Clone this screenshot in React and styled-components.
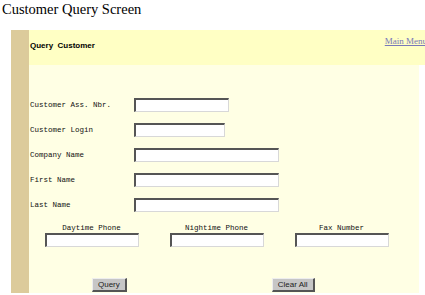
import React from 'react';
import styled, { createGlobalStyle } from 'styled-components';

const GlobalStyle = createGlobalStyle`
  html, body {
    margin: 0;
    padding: 0;
    background: #ffffff;
    overflow: hidden;
  }
`;

const fields = [
  { label: 'Customer Ass. Nbr.', width: 95 },
  { label: 'Customer Login', width: 91 },
  { label: 'Company Name', width: 145 },
  { label: 'First Name', width: 145 },
  { label: 'Last Name', width: 145 },
];

const phones = ['Daytime Phone', 'Nightime Phone', 'Fax Number'];

const App = () => {
  return (
    <Page>
      <GlobalStyle />
      <Title>Customer Query Screen</Title>
      <Panel>
        <Sidebar />
        <Main>
          <Header>
            <HeaderTitle>Query&nbsp;&nbsp;Customer</HeaderTitle>
            <MenuLink href="#">Main Menu</MenuLink>
          </Header>
          <Body>
            <Fields>
              {fields.map((f) => (
                <React.Fragment key={f.label}>
                  <Label>{f.label}</Label>
                  <Field>
                    <TextInput width={f.width} />
                  </Field>
                </React.Fragment>
              ))}
            </Fields>
            <Phones>
              {phones.map((p) => (
                <PhoneCell key={p}>
                  <PhoneLabel>{p}</PhoneLabel>
                  <TextInput width={94} />
                </PhoneCell>
              ))}
            </Phones>
            <Buttons>
              <Button type="button" offset={62}>Query</Button>
              <Button type="button" offset={145}>Clear All</Button>
            </Buttons>
          </Body>
        </Main>
      </Panel>
    </Page>
  );
};

export default App;

const Page = styled.div`
  width: 425px;
  height: 295px;
`;

const Title = styled.h1`
  margin: 0 0 0 2px;
  font-family: 'Liberation Serif', 'Times New Roman', serif;
  font-weight: normal;
  font-size: 14.5px;
  line-height: 19px;
  color: #000;
`;

const Panel = styled.div`
  margin: 11px 0 0 11px;
  width: 408px;
  display: flex;
  align-items: stretch;
`;

const Sidebar = styled.div`
  width: 18px;
  flex: none;
  background: #dccb9b;
`;

const Main = styled.div`
  flex: 1;
  display: flex;
  flex-direction: column;
  background: #ffffe4;
  min-width: 0;
`;

const Header = styled.div`
  height: 35px;
  margin-right: -6px;
  background: #ffffc4;
  display: flex;
  justify-content: space-between;
  align-items: flex-start;
  padding-left: 1px;
  overflow: hidden;
`;

const HeaderTitle = styled.div`
  margin-top: 11px;
  font-family: 'Liberation Sans', Arial, sans-serif;
  font-weight: bold;
  font-size: 8px;
  line-height: 10px;
  color: #000;
`;

const MenuLink = styled.a`
  margin-top: 6px;
  margin-right: -2px;
  font-family: 'Liberation Serif', 'Times New Roman', serif;
  font-size: 9px;
  line-height: 11px;
  color: #7878b8;
  white-space: nowrap;
`;

const Body = styled.div`
  padding: 27px 0 1px 1px;
  display: flex;
  flex-direction: column;
`;

const Fields = styled.div`
  display: grid;
  grid-template-columns: 104px 1fr;
  grid-auto-rows: 25px;
  align-items: center;
`;

const Label = styled.div`
  font-family: 'Liberation Mono', 'Courier New', monospace;
  font-size: 7.5px;
  line-height: 10px;
  color: #111;
  white-space: pre;
`;

const Field = styled.div`
  display: flex;
  align-items: center;
`;

const TextInput = styled.input.attrs({ type: 'text' })`
  box-sizing: border-box;
  width: ${({ width }) => width}px;
  height: 14px;
  margin: 0;
  padding: 0 2px;
  background: #fff;
  border-top: 2px solid #555;
  border-left: 2px solid #555;
  border-right: 1px solid #d8d8d8;
  border-bottom: 1px solid #d8d8d8;
  font-size: 8px;
  outline: none;
`;

const Phones = styled.div`
  margin: 6px 0 0 -1px;
  display: grid;
  grid-template-columns: repeat(3, 125px);
`;

const PhoneCell = styled.div`
  display: flex;
  flex-direction: column;
  align-items: center;
`;

const PhoneLabel = styled.div`
  font-family: 'Liberation Mono', 'Courier New', monospace;
  font-size: 7.5px;
  line-height: 10px;
  color: #111;
  white-space: pre;
`;

const Buttons = styled.div`
  margin-top: 31px;
  display: flex;
  align-items: center;
`;

const Button = styled.button`
  margin: 0 0 0 ${({ offset }) => offset}px;
  height: 14px;
  padding: 0 5px;
  box-sizing: border-box;
  background: #c6c6c6;
  border-top: 1px solid #eeeeee;
  border-left: 1px solid #eeeeee;
  border-right: 2px solid #555;
  border-bottom: 2px solid #555;
  font-family: 'Liberation Sans', Arial, sans-serif;
  font-size: 8px;
  line-height: 10px;
  color: #222;
  cursor: pointer;
`;
